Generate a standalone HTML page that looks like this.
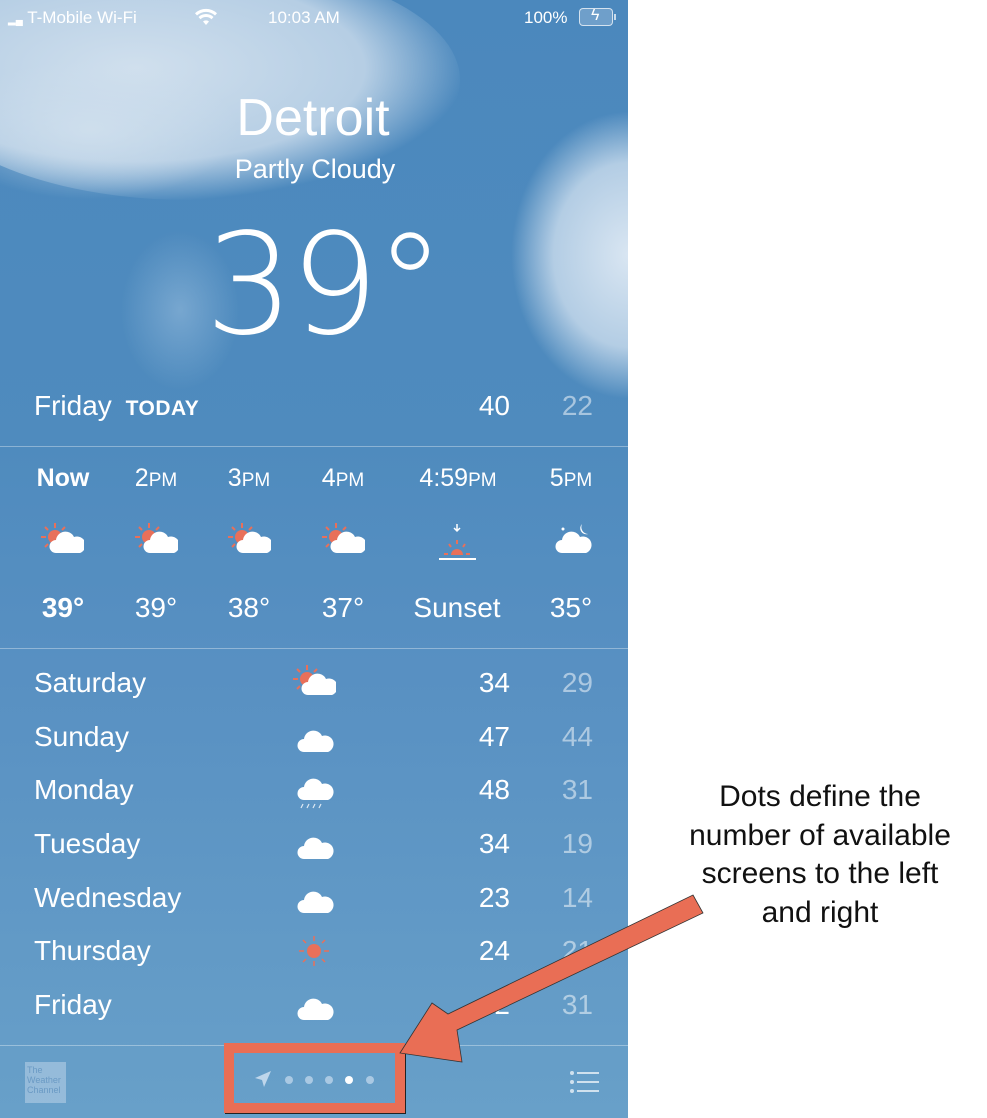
<!DOCTYPE html>
<html><head><meta charset="utf-8"><style>
*{margin:0;padding:0;box-sizing:border-box}
body{width:987px;height:1118px;background:#fff;position:relative;overflow:hidden;font-family:"Liberation Sans",Arial,sans-serif}
#ph{position:absolute;left:0;top:0;width:628px;height:1118px;overflow:hidden;
background:linear-gradient(180deg,#4b88bd 0%,#4f8bbe 40%,#5890c2 60%,#68a0c9 100%)}
.cl{position:absolute;border-radius:50%}
.t{position:absolute;color:#fff;white-space:nowrap}
.c{transform:translateX(-50%)}
.r{text-align:right}
.ln{position:absolute;left:0;width:628px;height:1px;background:rgba(255,255,255,.35)}
.lo{color:rgba(255,255,255,.5)}
small{font-size:19px}
.ann{position:absolute;left:660px;width:320px;top:778px;text-align:center;font-size:30px;line-height:38.5px;color:#111}
</style></head><body>
<div id="ph">
<div class="cl" style="left:-80px;top:-40px;width:540px;height:240px;background:radial-gradient(ellipse at 40% 45%,rgba(215,228,240,.95) 0%,rgba(200,218,235,.85) 50%,rgba(180,205,228,0) 72%)"></div>
<div class="cl" style="left:-60px;top:60px;width:300px;height:140px;background:radial-gradient(ellipse,rgba(210,225,238,.8) 0%,rgba(200,218,235,0) 70%)"></div>
<div class="cl" style="left:510px;top:110px;width:200px;height:290px;background:radial-gradient(ellipse at 60% 50%,rgba(225,235,245,.95) 0%,rgba(205,222,238,.8) 45%,rgba(180,205,228,0) 70%)"></div>
<div class="cl" style="left:120px;top:230px;width:120px;height:160px;background:radial-gradient(ellipse,rgba(160,195,225,.5) 0%,rgba(160,195,225,0) 70%)"></div>

<svg width="0" height="0" style="position:absolute">
<defs>
<g id="cloud"><path d="M9 30a6.5 6.5 0 0 1 0-13 a9.5 9.5 0 0 1 18-3 a8 8 0 0 1 6 16z" fill="#fff"/></g>
<g id="pc">
<g stroke="#e8705a" stroke-width="2"><line x1="15" y1="1" x2="15" y2="6"/><line x1="5" y1="5" x2="8" y2="8"/><line x1="25" y1="5" x2="22" y2="8"/><line x1="1" y1="15" x2="6" y2="15"/><line x1="5" y1="25" x2="8" y2="22"/></g>
<circle cx="15" cy="15" r="7" fill="#e8705a"/>
<path d="M16 31a6.5 6.5 0 0 1 0-13 a9.5 9.5 0 0 1 18-3 a8 8 0 0 1 6 16z" fill="#fff"/>
</g>
</defs></svg>

<div class="t" style="left:8px;top:8px;font-size:17px"><span style="font-size:10px">▂▄</span> T-Mobile Wi-Fi</div>
<svg style="position:absolute;left:194px;top:8px" width="24" height="18" viewBox="0 0 24 18"><path d="M12 17l3-3.5a4.5 4.5 0 0 0-6 0z M4.5 9a11 11 0 0 1 15 0l-2 2.2a8 8 0 0 0-11 0z M1 5.3a16 16 0 0 1 22 0l-2 2.2a13 13 0 0 0-18 0z" fill="#fff"/></svg>
<div class="t" style="left:268px;top:8px;font-size:17px">10:03 AM</div>
<div class="t" style="left:524px;top:8px;font-size:17px">100%</div>
<div style="position:absolute;left:579px;top:8px;width:34px;height:18px;border:1.5px solid rgba(255,255,255,.7);border-radius:4px;background:rgba(255,255,255,.2)"></div>
<div style="position:absolute;left:614px;top:14px;width:2px;height:6px;background:rgba(255,255,255,.7)"></div>
<div class="t" style="left:591px;top:7px;font-size:16px">ϟ</div>

<div class="t c" style="left:313px;top:88px;font-size:52px">Detroit</div>
<div class="t c" style="left:315px;top:154px;font-size:27px">Partly Cloudy</div>
<div class="t c" style="left:323px;top:204px;font-size:140px;font-family:'DejaVu Sans ExtraLight','DejaVu Sans','Liberation Sans',sans-serif;font-weight:200;letter-spacing:-4px">39°</div>

<div class="t" style="left:34px;top:390px;font-size:28px">Friday <b style="font-size:21px;letter-spacing:.5px;margin-left:6px">TODAY</b></div>
<div class="t r" style="left:440px;width:70px;top:390px;font-size:28px">40</div>
<div class="t r lo" style="left:522px;width:71px;top:390px;font-size:28px">22</div>
<div class="ln" style="top:446px"></div>

<div class="t c" style="left:63px;top:464px;font-size:25px;font-weight:bold">Now</div>
<div class="t c" style="left:156px;top:464px;font-size:25px">2<small>PM</small></div>
<div class="t c" style="left:249px;top:464px;font-size:25px">3<small>PM</small></div>
<div class="t c" style="left:343px;top:464px;font-size:25px">4<small>PM</small></div>
<div class="t c" style="left:458px;top:464px;font-size:25px">4:59<small>PM</small></div>
<div class="t c" style="left:571px;top:464px;font-size:25px">5<small>PM</small></div>

<svg style="position:absolute;left:40px;top:522px" width="44" height="34"><use href="#pc"/></svg>
<svg style="position:absolute;left:134px;top:522px" width="44" height="34"><use href="#pc"/></svg>
<svg style="position:absolute;left:227px;top:522px" width="44" height="34"><use href="#pc"/></svg>
<svg style="position:absolute;left:321px;top:522px" width="44" height="34"><use href="#pc"/></svg>
<svg style="position:absolute;left:436px;top:522px" width="44" height="40" viewBox="0 0 44 40"><path d="M21 2v7m-3-3l3 3 3-3" stroke="#fff" stroke-width="1.5" fill="none"/><g stroke="#e8705a" stroke-width="2"><line x1="21" y1="18" x2="21" y2="22"/><line x1="13" y1="22" x2="15" y2="25"/><line x1="29" y1="22" x2="27" y2="25"/><line x1="8" y1="32" x2="12" y2="32"/><line x1="30" y1="32" x2="34" y2="32"/></g><path d="M15 33a6 6 0 0 1 12 0z" fill="#e8705a"/><line x1="3" y1="37" x2="40" y2="37" stroke="#fff" stroke-width="2"/></svg>
<svg style="position:absolute;left:552px;top:522px" width="44" height="34"><path d="M30 2a6 6 0 0 0 6 10 a7 7 0 0 1-6-10z" fill="#fff"/><circle cx="11" cy="7" r="1.5" fill="#fff"/><path d="M10 31a6.5 6.5 0 0 1 0-13 a9.5 9.5 0 0 1 18-3 a8 8 0 0 1 6 16z" fill="#fff"/></svg>

<div class="t c" style="left:63px;top:592px;font-size:28px;font-weight:bold">39°</div>
<div class="t c" style="left:156px;top:592px;font-size:28px">39°</div>
<div class="t c" style="left:249px;top:592px;font-size:28px">38°</div>
<div class="t c" style="left:343px;top:592px;font-size:28px">37°</div>
<div class="t c" style="left:457px;top:592px;font-size:28px">Sunset</div>
<div class="t c" style="left:571px;top:592px;font-size:28px">35°</div>
<div class="ln" style="top:648px"></div>

<div class="t" style="left:34px;top:667px;font-size:28px">Saturday</div>
<div class="t" style="left:34px;top:721px;font-size:28px">Sunday</div>
<div class="t" style="left:34px;top:774px;font-size:28px">Monday</div>
<div class="t" style="left:34px;top:828px;font-size:28px">Tuesday</div>
<div class="t" style="left:34px;top:882px;font-size:28px">Wednesday</div>
<div class="t" style="left:34px;top:935px;font-size:28px">Thursday</div>
<div class="t" style="left:34px;top:989px;font-size:28px">Friday</div>

<div class="t r" style="left:440px;width:70px;top:667px;font-size:28px">34</div>
<div class="t r" style="left:440px;width:70px;top:721px;font-size:28px">47</div>
<div class="t r" style="left:440px;width:70px;top:774px;font-size:28px">48</div>
<div class="t r" style="left:440px;width:70px;top:828px;font-size:28px">34</div>
<div class="t r" style="left:440px;width:70px;top:882px;font-size:28px">23</div>
<div class="t r" style="left:440px;width:70px;top:935px;font-size:28px">24</div>
<div class="t r" style="left:440px;width:70px;top:989px;font-size:28px">2</div>
<div class="t r lo" style="left:522px;width:71px;top:667px;font-size:28px">29</div>
<div class="t r lo" style="left:522px;width:71px;top:721px;font-size:28px">44</div>
<div class="t r lo" style="left:522px;width:71px;top:774px;font-size:28px">31</div>
<div class="t r lo" style="left:522px;width:71px;top:828px;font-size:28px">19</div>
<div class="t r lo" style="left:522px;width:71px;top:882px;font-size:28px">14</div>
<div class="t r lo" style="left:522px;width:71px;top:935px;font-size:28px">21</div>
<div class="t r lo" style="left:522px;width:71px;top:989px;font-size:28px">31</div>

<svg style="position:absolute;left:292px;top:664px" width="44" height="34"><use href="#pc"/></svg>
<svg style="position:absolute;left:295px;top:722px" width="40" height="32"><use href="#cloud"/></svg>
<svg style="position:absolute;left:295px;top:770px" width="40" height="40"><use href="#cloud"/><g stroke="#fff" stroke-width="1.2" opacity=".8"><line x1="8" y1="34" x2="6" y2="38"/><line x1="14" y1="34" x2="12" y2="38"/><line x1="20" y1="34" x2="18" y2="38"/><line x1="26" y1="34" x2="24" y2="38"/></g></svg>
<svg style="position:absolute;left:295px;top:829px" width="40" height="32"><use href="#cloud"/></svg>
<svg style="position:absolute;left:295px;top:883px" width="40" height="32"><use href="#cloud"/></svg>
<svg style="position:absolute;left:298px;top:935px" width="32" height="32"><g stroke="#e8705a" stroke-width="1.5"><line x1="16" y1="1" x2="16" y2="6"/><line x1="16" y1="26" x2="16" y2="31"/><line x1="1" y1="16" x2="6" y2="16"/><line x1="26" y1="16" x2="31" y2="16"/><line x1="5" y1="5" x2="8" y2="8"/><line x1="27" y1="27" x2="24" y2="24"/><line x1="27" y1="5" x2="24" y2="8"/><line x1="5" y1="27" x2="8" y2="24"/></g><circle cx="16" cy="16" r="7" fill="#e8705a"/></svg>
<svg style="position:absolute;left:295px;top:990px" width="40" height="32"><use href="#cloud"/></svg>

<div class="ln" style="top:1045px"></div>
<div style="position:absolute;left:25px;top:1062px;width:41px;height:41px;background:rgba(170,200,225,.7);color:#6a9ac4;font-size:9px;line-height:10px;padding:3px 2px">The Weather Channel</div>
<svg style="position:absolute;left:254px;top:1070px" width="18" height="18"><path d="M17 1L1 8l7 2 2 7z" fill="rgba(200,220,238,.9)"/></svg>
<div style="position:absolute;left:285px;top:1076px;width:8px;height:8px;border-radius:50%;background:rgba(200,220,238,.7)"></div>
<div style="position:absolute;left:305px;top:1076px;width:8px;height:8px;border-radius:50%;background:rgba(200,220,238,.7)"></div>
<div style="position:absolute;left:325px;top:1076px;width:8px;height:8px;border-radius:50%;background:rgba(200,220,238,.7)"></div>
<div style="position:absolute;left:345px;top:1076px;width:8px;height:8px;border-radius:50%;background:#fff"></div>
<div style="position:absolute;left:366px;top:1076px;width:8px;height:8px;border-radius:50%;background:rgba(200,220,238,.7)"></div>
<svg style="position:absolute;left:568px;top:1070px" width="32" height="24"><g fill="rgba(220,232,242,.9)"><circle cx="4" cy="3" r="2"/><circle cx="4" cy="12" r="2"/><circle cx="4" cy="21" r="2"/><rect x="9" y="2" width="22" height="2"/><rect x="9" y="11" width="22" height="2"/><rect x="9" y="20" width="22" height="2"/></g></svg>
</div>

<div style="position:absolute;left:224px;top:1043px;width:181px;height:70px;border:10px solid #e96e55;box-shadow:1px 1px 0 #222"></div>
<svg style="position:absolute;left:0;top:0" width="987" height="1118"><polygon points="693,895 703,913 457,1030 462,1062 400,1053 432,1003 448,1014" fill="#e96e55" stroke="#333" stroke-width="0.8"/></svg>

<div class="ann">Dots define the<br>number of available<br>screens to the left<br>and right</div>
</body></html>
